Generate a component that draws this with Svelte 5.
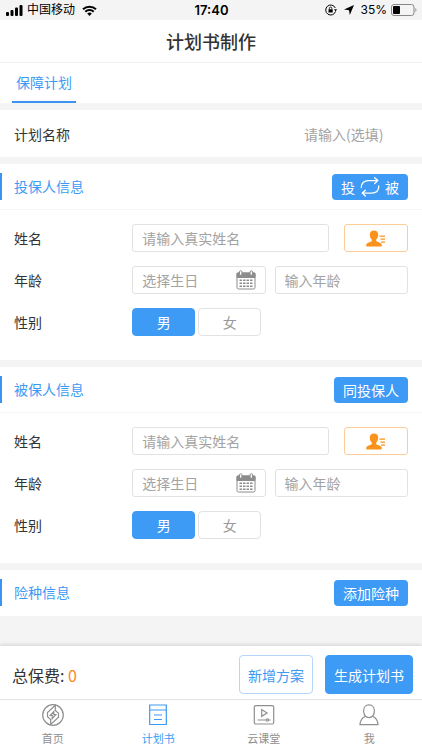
<script>
  let planName = '';
  let activeNav = 'plan';

  let people = [
    { id: 'holder', title: '投保人信息', name: '', birthday: '', age: '', sex: 'male' },
    { id: 'insured', title: '被保人信息', name: '', birthday: '', age: '', sex: 'male' }
  ];

  const sexes = [
    { value: 'male', label: '男' },
    { value: 'female', label: '女' }
  ];

  const navItems = [
    { id: 'home', label: '首页' },
    { id: 'plan', label: '计划书' },
    { id: 'class', label: '云课堂' },
    { id: 'me', label: '我' }
  ];

  const fields = ['name', 'birthday', 'age', 'sex'];

  function swapPeople() {
    const [a, b] = people;
    for (const f of fields) {
      [a[f], b[f]] = [b[f], a[f]];
    }
    people = people;
  }

  function copyHolder() {
    for (const f of fields) {
      people[1][f] = people[0][f];
    }
    people = people;
  }
</script>

<div class="page">
  <div class="status-bar">
    <div class="status-left">
      <svg class="signal" viewBox="0 0 17 11" fill="#000">
        <rect x="0" y="7" width="3" height="4" rx="1" />
        <rect x="4.5" y="5" width="3" height="6" rx="1" />
        <rect x="9" y="2.5" width="3" height="8.500" rx="1" />
        <rect x="13.500" y="0" width="3" height="11" rx="1" />
      </svg>
      <span>中国移动</span>
      <svg class="wifi" viewBox="0 0 15 11" fill="none" stroke="#000" stroke-width="2">
        <path d="M1 4.200a9.500 9.500 0 0 1 13 0" />
        <path d="M3.300 6.800a6 6 0 0 1 8.400 0" />
        <path d="M7.500 11L5.200 8.600a3.300 3.300 0 0 1 4.600 0z" fill="#000" stroke="none" />
      </svg>
    </div>
    <span class="time">17:40</span>
    <div class="status-right">
      <svg class="lock" viewBox="0 0 12 12" fill="none" stroke="#000">
        <path d="M10.300 4A5 5 0 1 0 10.500 7.500" />
        <path d="M9 5.300h3L10.600 7.500z" fill="#000" stroke="none" />
        <rect x="3.500" y="5.300" width="4.200" height="3.200" fill="#000" stroke="none" />
        <path d="M4.400 5.500V4.300a1.200 1.200 0 0 1 2.400 0v1.200" stroke-width=".8" />
      </svg>
      <svg class="arrow" viewBox="0 0 10 10" fill="#000"><path d="M10 0L5.800 10 5 5.200 0 4.500z" /></svg>
      <span>35%</span>
      <svg class="battery" viewBox="0 0 26 12">
        <rect x=".5" y=".5" width="22.500" height="11" rx="2.500" fill="none" stroke="#888" />
        <rect x="2" y="2" width="7" height="8" rx="1" fill="#000" />
        <path d="M24.300 4c1.600.6 1.600 3.400 0 4z" fill="#999" />
      </svg>
    </div>
  </div>

  <header>
    <h1>计划书制作</h1>
  </header>

  <nav class="tabs">
    <button class="tab active">保障计划</button>
  </nav>

  <div class="plan-name">
    <label for="plan-name">计划名称</label>
    <input id="plan-name" type="text" placeholder="请输入(选填)" bind:value={planName} />
  </div>

  {#each people as person, i}
    <section>
      <div class="section-head">
        <h2>{person.title}</h2>
        {#if i === 0}
          <button class="small-btn swap" on:click={swapPeople}>
            <span>投</span>
            <svg viewBox="0 0 20 20" fill="none" stroke="#fff" stroke-width="1.300" stroke-linecap="round" stroke-linejoin="round">
              <path d="M1.200 10.500C1.200 6.300 4 3.600 8.500 3.600h9M14.600.8l3.200 2.800-3.200 2.900" />
              <path d="M18.800 9c0 4.400-2.700 7.100-7.200 7.100H2.500M5.400 13.200l-3.200 2.900 3.200 2.900" />
            </svg>
            <span>被</span>
          </button>
        {:else}
          <button class="small-btn" on:click={copyHolder}>同投保人</button>
        {/if}
      </div>

      <div class="form">
        <div class="row">
          <label for="{person.id}-name">姓名</label>
          <div class="controls">
            <input id="{person.id}-name" class="box" type="text" placeholder="请输入真实姓名" bind:value={person.name} />
            <button class="contact" aria-label="选择客户">
              <svg viewBox="0 0 20 17" fill="#fb921b">
                <path d="M8 .5c2.800 0 4.400 1.900 4.200 4.500-.1 1.900-.9 3.600-2 4.600v1.300c.2.900 4.900 1.500 5.500 3.500.3 1.200-.2 2.100-1 2.100H1.200C.3 16.500 0 15.500.3 14.400c.6-2 5.300-2.600 5.500-3.500V9.600c-1.100-1-1.900-2.700-2-4.600C3.600 2.400 5.200.5 8 .5z" />
                <path d="M13.500 5.500H19v1.200h-5.500zM14.500 8.500H19v1.200h-4.500zM15 11.500h4v1.200h-4z" />
              </svg>
            </button>
          </div>
        </div>

        <div class="row">
          <label for="{person.id}-birthday">年龄</label>
          <div class="controls ages">
            <div class="box date">
              <input id="{person.id}-birthday" type="text" placeholder="选择生日" bind:value={person.birthday} />
              <button aria-label="打开日历">
                <svg viewBox="0 0 20 20" fill="none" stroke="#8c8c8c">
                  <rect x="1" y="3" width="18" height="16" rx="1.500" />
                  <path d="M1 3h18v4.500H1z" fill="#8c8c8c" />
                  <rect x="3.500" y=".7" width="2.400" height="4.600" rx="1.200" fill="#fff" />
                  <rect x="14.100" y=".7" width="2.400" height="4.600" rx="1.200" fill="#fff" />
                  <path d="M3.500 10.200h13M3.500 13.200h13M3.500 16.200h13" stroke-width="1.400" stroke-dasharray="2.500 1" />
                </svg>
              </button>
            </div>
            <input class="box" type="text" inputmode="numeric" aria-label="年龄" placeholder="输入年龄" bind:value={person.age} />
          </div>
        </div>

        <div class="row">
          <span>性别</span>
          <div class="controls sexes">
            {#each sexes as sex}
              <button
                class="sex"
                class:active={person.sex === sex.value}
                aria-pressed={person.sex === sex.value}
                on:click={() => (person.sex = sex.value)}
              >{sex.label}</button>
            {/each}
          </div>
        </div>
      </div>
    </section>
  {/each}

  <section>
    <div class="section-head last">
      <h2>险种信息</h2>
      <button class="small-btn">添加险种</button>
    </div>
  </section>

  <footer>
    <div class="summary">
      <p>总保费: <span>0</span></p>
      <button class="big-btn outline">新增方案</button>
      <button class="big-btn">生成计划书</button>
    </div>

    <nav class="bottom-nav">
      {#each navItems as item}
        <button class:active={item.id === activeNav} on:click={() => (activeNav = item.id)}>
          <svg viewBox="0 0 24 24" fill="none" stroke="currentColor" stroke-width="1.200">
            {#if item.id === 'home'}
              <circle cx="12" cy="12" r="10.300" />
              <path d="M14.300 2.200v5.300l3.200 2.800v4l-7.800 7.200v-5l-3.200-2.800V9.500z" />
              <path d="M12.800 8.500v3.200h2l-3.600 4v-3.400h-2z" />
            {:else if item.id === 'plan'}
              <path d="M3.700 2h16.600v19.500H3.700zM3.700 7h16.600M8 12h8M8 16.500h8" />
            {:else if item.id === 'class'}
              <rect x="2.300" y="2.700" width="19.400" height="18.300" rx="1.500" />
              <path d="M9.700 6.500v6.800l5.300-3.400zM5.500 17h8.700M16.600 17h2" />
              <circle cx="15.400" cy="17" r="1.200" />
            {:else}
              <path d="M12 1.900c3.300 0 5.400 2.600 5.400 6s-2 6.700-5.400 6.700-5.400-3.300-5.400-6.700 2.100-6 5.400-6z" />
              <path d="M8.600 13.300C5.500 14.500 3.300 17 3 21.600h18c-.3-4.600-2.500-7.100-5.600-8.300" />
            {/if}
          </svg>
          <span>{item.label}</span>
        </button>
      {/each}
    </nav>
  </footer>
</div>

<style>
  :global(body) {
    background: #f4f4f4;
  }

  .page {
    min-height: 100vh;
    display: flex;
    flex-direction: column;
    font-family: 'Noto Sans CJK SC', sans-serif;
    font-size: 14px;
    line-height: 20px;
    color: #333;
  }

  button,
  input {
    font: inherit;
    margin: 0;
    padding: 0;
    border: none;
    background: none;
    box-sizing: border-box;
    min-width: 0;
  }

  button {
    cursor: pointer;
  }

  svg {
    display: block;
    flex-shrink: 0;
  }

  input {
    color: #333;
    outline: none;
  }

  input::placeholder {
    color: #a3a3a3;
    opacity: 1;
  }

  /* Status bar */
  .status-bar {
    display: grid;
    grid-template-columns: 1fr auto 1fr;
    align-items: center;
    height: 20px;
    padding: 0 5px 0 6px;
    font-family: Inter, 'Noto Sans CJK SC', sans-serif;
    font-size: 12px;
    color: #000;
  }

  .status-left,
  .status-right {
    display: flex;
    align-items: center;
    gap: 4px;
  }

  .status-right {
    justify-content: flex-end;
    gap: 7px;
  }

  .time {
    font-weight: 600;
    font-size: 13px;
  }

  .signal {
    width: 17px;
    height: 11px;
  }

  .wifi {
    width: 15px;
    height: 11px;
    margin-left: 3px;
  }

  .lock {
    width: 12px;
    height: 12px;
  }

  .arrow {
    width: 10px;
    height: 10px;
  }

  .battery {
    width: 26px;
    height: 12px;
    margin-left: -3px;
  }

  /* Header */
  header {
    padding: 8px 0;
    background: #fff;
    border-bottom: 1px solid #f2f2f2;
    text-align: center;
  }

  h1 {
    margin: 0;
    font-size: 18px;
    line-height: 26px;
    font-weight: 500;
  }

  .tabs {
    display: flex;
    padding: 0 12px;
    margin-bottom: 7px;
    background: #fff;
  }

  .tab {
    padding: 9px 4px;
    border-bottom: 2px solid transparent;
    color: #3c9af4;
  }

  .tab.active {
    border-color: #3c94f2;
  }

  .plan-name {
    display: flex;
    justify-content: space-between;
    align-items: center;
    height: 47px;
    padding: 0 14px;
    margin-bottom: 7px;
    background: #fff;
  }

  .plan-name input {
    width: 104px;
  }

  /* Sections */
  section {
    margin-bottom: 7px;
    background: #fff;
  }

  .section-head {
    display: flex;
    align-items: center;
    justify-content: space-between;
    padding: 9px 14px 9px 0;
    border-bottom: 1px solid #f6f6f6;
  }

  .section-head.last {
    border-bottom-color: #fff;
  }

  h2 {
    margin: 0;
    padding-left: 12px;
    border-left: 2px solid #3c94f2;
    font-size: 14px;
    line-height: 27px;
    font-weight: 400;
    color: #3c9af4;
  }

  .small-btn {
    height: 26px;
    padding: 0 9px;
    border-radius: 4px;
    background: #3d9af5;
    color: #fff;
  }

  .swap {
    display: flex;
    align-items: center;
    gap: 5px;
  }

  .swap svg {
    width: 20px;
    height: 20px;
  }

  .form {
    display: flex;
    flex-direction: column;
    gap: 14px;
    padding: 14px 14px 24px;
  }

  .row {
    display: grid;
    grid-template-columns: minmax(0, 3fr) minmax(0, 7fr);
    align-items: center;
  }

  .controls {
    display: flex;
    height: 28px;
  }

  .box {
    flex: 1 1 0;
    min-width: 0;
    box-sizing: border-box;
    padding: 0 9px;
    border: 1px solid #e2e2e2;
    border-radius: 3px;
  }

  .contact {
    width: 64px;
    margin-left: 15px;
    border: 1px solid #fbcd97;
    border-radius: 3px;
    display: flex;
    align-items: center;
    justify-content: center;
  }

  .contact svg {
    width: 20px;
    height: 17px;
  }

  .ages {
    gap: 9px;
  }

  .date {
    display: flex;
    align-items: center;
    justify-content: space-between;
  }

  .date input {
    flex: 1;
  }

  .date svg {
    width: 20px;
    height: 20px;
  }

  .sexes {
    gap: 3px;
  }

  .sex {
    width: 63px;
    border: 1px solid #e2e2e2;
    border-radius: 4px;
    color: #999;
  }

  .sex.active {
    border-color: #3d9af5;
    background: #3d9af5;
    color: #fff;
  }

  /* Footer */
  footer {
    position: sticky;
    bottom: 0;
    margin-top: auto;
    background: #fff;
    box-shadow: 0 -1px 4px rgba(0, 0, 0, 0.15);
  }

  .summary {
    display: flex;
    align-items: center;
    gap: 12px;
    height: 53px;
    padding: 4px 9px 0 12px;
    box-sizing: border-box;
  }

  .summary p {
    flex: 1;
    margin: 0;
    font-size: 16px;
  }

  .summary p span {
    color: #fb8a1b;
  }

  .big-btn {
    height: 39px;
    padding: 0 8px;
    border: 1px solid #3d9af5;
    border-radius: 4px;
    background: #3d9af5;
    color: #fff;
  }

  .big-btn.outline {
    border-color: #b3d6fa;
    background: #fff;
    color: #3c9af4;
  }

  .bottom-nav {
    display: flex;
    border-top: 1px solid #e2e2e2;
  }

  .bottom-nav button {
    flex: 1;
    display: flex;
    flex-direction: column;
    align-items: center;
    gap: 3px;
    padding: 3px 0 4px;
    font-size: 11px;
    line-height: 16px;
    color: #8f8f8f;
  }

  .bottom-nav button.active {
    color: #3c9af4;
  }

  .bottom-nav svg {
    width: 24px;
    height: 24px;
  }
</style>
